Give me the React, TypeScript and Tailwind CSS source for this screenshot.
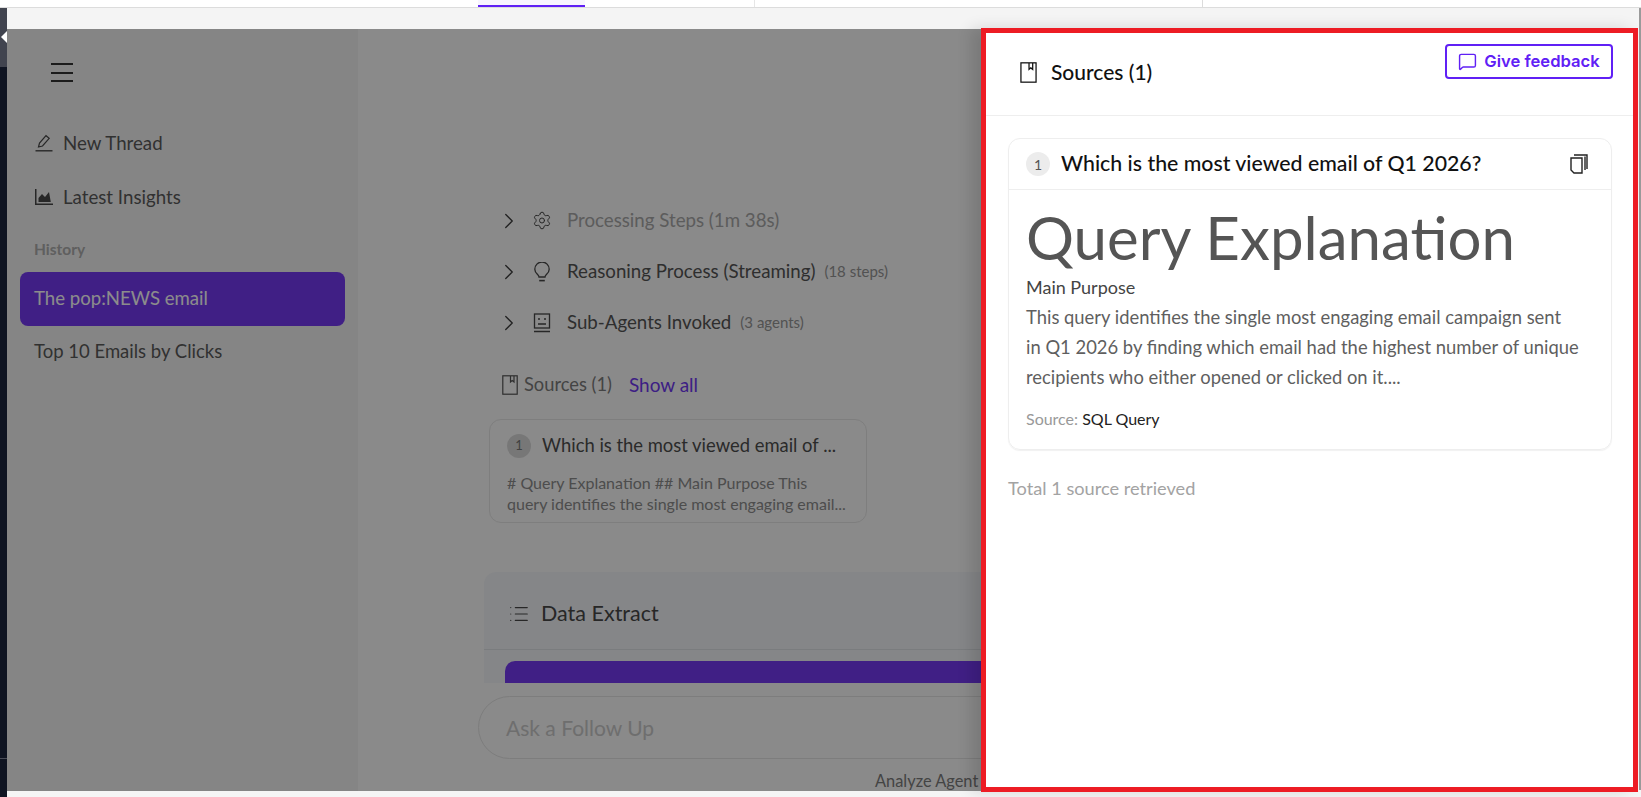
import { ChevronRight, Settings, List, MessageSquare } from "lucide-react";

const font = { fontFamily: '"Lato", "Open Sans", sans-serif' };

function BookIcon({ className }: { className?: string }) {
  return (
    <svg viewBox="0 0 16 20" fill="none" stroke="currentColor" strokeWidth="1.2" className={className}>
      <rect x="0.8" y="0.8" width="14.4" height="18.4" />
      <path d="M8.5 1v6l1.7-1.4L12 7V1" />
    </svg>
  );
}

function BulbIcon() {
  return (
    <svg viewBox="0 0 16 20" fill="none" stroke="currentColor" strokeWidth="1.3" className="w-[16px] h-[20px]">
      <path d="M5 15c0-2.4-4.2-3.4-4.2-7.8a7.2 7.2 0 0 1 14.4 0c0 4.4-4.2 5.4-4.2 7.8z" />
      <path d="M5.2 18.6h5.6" strokeWidth="1.6" />
    </svg>
  );
}

function AgentIcon() {
  return (
    <svg viewBox="0 0 18 20" fill="none" stroke="currentColor" strokeWidth="1.3" className="w-[18px] h-[20px]">
      <rect x="1.5" y="1" width="15" height="14" />
      <path d="M5 11h8M1 18.5h16" />
      <circle cx="6" cy="6" r="1" fill="currentColor" stroke="none" />
      <circle cx="12" cy="6" r="1" fill="currentColor" stroke="none" />
    </svg>
  );
}

function PencilIcon() {
  return (
    <svg viewBox="0 0 18 18" fill="none" stroke="currentColor" strokeWidth="1.2" className="w-[18px] h-[18px]">
      <path d="M3.5 13l1-4L11 1.7l3.2 2.6L7.5 12z" />
      <path d="M0.5 16.8h17" strokeWidth="1.4" />
    </svg>
  );
}

function ChartIcon() {
  return (
    <svg viewBox="0 0 18 16" className="w-[18px] h-[16px]" fill="currentColor">
      <path d="M0 0h1.5v14.4H18V16H0z" />
      <path d="M3.5 13V9l3.5-4 3 3 4-5 1.8 10z" />
    </svg>
  );
}

function CopyIcon() {
  return (
    <svg viewBox="0 0 18 20" fill="none" stroke="currentColor" strokeWidth="1.4" className="w-[18px] h-[20px]">
      <path d="M1 4h11v15H4l-3-3z" />
      <path d="M4 1h13v14" />
      <path d="M15 2.5V16" />
    </svg>
  );
}

function SideRow({ icon, label }: { icon: React.ReactNode; label: string }) {
  return (
    <div className="flex items-center h-[54px] pl-[28px] gap-[10px] text-[18.7px] text-[#5a5a5a]">
      <span className="w-[18px] flex justify-center text-[#484848]">{icon}</span>
      <span>{label}</span>
    </div>
  );
}

function StepRow({
  icon,
  label,
  extra,
  muted,
}: {
  icon: React.ReactNode;
  label: string;
  extra?: string;
  muted?: boolean;
}) {
  return (
    <div className="flex items-center h-[51px] pl-[18px]">
      <ChevronRight className="w-[26px] h-[26px] text-[#3c3c3c] -ml-[6px] -mr-[4px]" strokeWidth={1.2} />
      <span className="w-[20px] ml-[14px] flex justify-center text-[#484848]">{icon}</span>
      <span className={`ml-[15px] text-[18.7px] ${muted ? "text-[#a8a8a8]" : "text-[#555555]"}`}>{label}</span>
      {extra && <span className="ml-[9px] text-[15px] text-[#959595]">{extra}</span>}
    </div>
  );
}

export default function App() {
  return (
    <div className="relative w-[1641px] h-[797px] overflow-hidden flex flex-col bg-[#f5f5f5]" style={font}>
      {/* browser tab strip */}
      <div className="h-[8px] shrink-0 bg-white border-b border-[#dcdcdc] flex">
        <div className="ml-[478px] w-[107px] h-[7px] bg-[#f8f5ff] border-b-2 border-[#5f1ff5]" />
        <div className="ml-[169px] w-px h-[7px] bg-[#e6e6e6]" />
        <div className="ml-[447px] w-px h-[7px] bg-[#dcdcdc]" />
      </div>

      <div className="flex-1 flex min-h-0">
        {/* left edge strip */}
        <div className="w-[7px] shrink-0 flex flex-col bg-[#0f1422]">
          <div className="h-[59px] bg-[#41444f] flex items-center justify-end pb-[1px]">
            <div className="w-0 h-0 border-y-[6px] border-y-transparent border-r-[6px] border-r-white" />
          </div>
          <div className="mt-[691px] h-px bg-[#4a4d58]" />
        </div>

        <div className="flex-1 min-w-0 flex flex-col">
          <div className="h-[21px] shrink-0 bg-[#f4f4f4]" />

          {/* application under the dim layer */}
          <div className="relative h-[762px] w-[1631px] flex overflow-hidden bg-[#fbfbfb]">
            <aside className="w-[351px] shrink-0 bg-[#f3f3f3] flex flex-col">
              <div className="h-[80px] pl-[44px] pt-[34px]">
                <div className="w-[22px] h-[19px] flex flex-col justify-between">
                  <div className="h-[2px] bg-[#333333]" />
                  <div className="h-[2px] bg-[#333333]" />
                  <div className="h-[2px] bg-[#333333]" />
                </div>
              </div>
              <div className="mt-[7px]">
                <SideRow icon={<PencilIcon />} label="New Thread" />
                <SideRow icon={<ChartIcon />} label="Latest Insights" />
              </div>
              <div className="mt-[13px] h-[26px] pl-[27px] flex items-center text-[15.5px] font-bold text-[#adadad]">History</div>
              <div className="mt-[9px] ml-[13px] w-[325px] h-[54px] rounded-[8px] bg-[#763af2] text-white text-[18.6px] pl-[14px] pb-[1px] flex items-center">
                The pop:NEWS email
              </div>
              <div className="h-[52px] pl-[27px] flex items-center text-[18.5px] text-[#5a5a5a]">Top 10 Emails by Clicks</div>
            </aside>

            <main className="flex-1 min-w-0 flex flex-col">
              <div className="h-[654px] shrink-0 overflow-hidden pl-[126px] pt-[166px]">
                <StepRow icon={<Settings className="w-[23px] h-[23px]" strokeWidth={1.2} />} label="Processing Steps (1m 38s)" muted />
                <StepRow icon={<BulbIcon />} label="Reasoning Process (Streaming)" extra="(18 steps)" />
                <StepRow icon={<AgentIcon />} label="Sub-Agents Invoked" extra="(3 agents)" />

                <div className="mt-[23px] h-[28px] pl-[18px] flex items-center text-[18px]">
                  <BookIcon className="w-[16px] h-[20px] text-[#555555]" />
                  <span className="ml-[6px] text-[18.3px] text-[#7c7c7c]">Sources (1)</span>
                  <span className="ml-[17px] text-[19px] text-[#6f38f0]">Show all</span>
                </div>

                <div className="mt-[20px] ml-[5px] w-[378px] h-[104px] rounded-[12px] border border-[#e6e6e6] pl-[17px] pr-[16px] pt-[12px]">
                  <div className="flex items-center">
                    <span className="w-[24px] h-[24px] rounded-full bg-[#d9d9d9] text-[#777777] text-[13px] flex items-center justify-center shrink-0">1</span>
                    <span className="ml-[11px] text-[18.4px] text-[#4e4e4e] whitespace-nowrap">Which is the most viewed email of ...</span>
                  </div>
                  <p className="mt-[12px] text-[16px] leading-[21px] text-[#8c8c8c] whitespace-nowrap">
                    # Query Explanation ## Main Purpose This
                    <br />
                    query identifies the single most engaging email...
                  </p>
                </div>

                <section className="mt-[49px] w-[1028px] h-[300px] rounded-t-[12px] bg-[#f3f5f8]">
                  <div className="h-[78px] border-b border-[#dfe2e6] pl-[24px] pt-[6px] flex items-center text-[21.5px] text-[#484848]">
                    <List className="w-[22px] h-[22px]" strokeWidth={1.3} />
                    <span className="ml-[11px]">Data Extract</span>
                  </div>
                  <div className="mt-[11px] ml-[21px] w-[986px] h-[60px] rounded-t-[10px] bg-[#763af2]" />
                </section>
              </div>

              <div className="mt-[13px] ml-[120px] w-[1040px] h-[63px] shrink-0 rounded-[32px] border border-[#e3e3e3] pl-[27px] flex items-center text-[21px] text-[#c9c9c9]">
                Ask a Follow Up
              </div>
              <div className="mt-[12px] ml-[517px] text-[16.4px] leading-[20px] text-[#7c7c7c] whitespace-nowrap">Analyze Agent</div>
            </main>

            {/* dim layer */}
            <div className="absolute inset-0 bg-black/45" />
          </div>
        </div>

        <div className="w-[3px] shrink-0 pl-px">
          <div className="h-[782px] bg-[#9a9a9a]" />
        </div>
      </div>

      {/* drawer */}
      <div className="absolute top-[28px] bottom-[5px] right-[3px] w-[657px] border-[5px] border-[#ed1c24] bg-white flex flex-col shadow-[-10px_0_14px_rgba(0,0,0,0.12)]">
        <header className="h-[83px] shrink-0 border-b border-[#eeeeee] flex justify-between pl-[34px] pr-[20px]">
          <div className="flex items-center pb-[4px] text-[#111111]">
            <BookIcon className="w-[17px] h-[21px]" />
            <span className="ml-[14px] text-[21px] font-medium">Sources (1)</span>
          </div>
          <button className="self-start mt-[11px] w-[168px] h-[35px] rounded-[4px] border-2 border-[#6020f5] text-[#6020f5] flex items-center justify-center gap-[7px] text-[16.6px] font-semibold" style={{ fontFamily: '"Inter", sans-serif' }}>
            <MessageSquare className="w-[19px] h-[19px]" strokeWidth={1.8} />
            Give feedback
          </button>
        </header>

        <div className="flex-1 pl-[22px] pr-[21px] pt-[22px]">
          <article className="h-[312px] rounded-[12px] border border-[#eeeeee] shadow-[0_1px_1px_rgba(0,0,0,0.06)]">
            <div className="h-[51px] border-b border-[#eeeeee] flex items-center pl-[17px] pr-[23px]">
              <span className="w-[24px] h-[24px] rounded-full bg-[#ececec] text-[#555555] text-[14px] flex items-center justify-center">1</span>
              <span className="ml-[11px] text-[21.3px] font-medium text-[#111111]">Which is the most viewed email of Q1 2026?</span>
              <span className="ml-auto text-[#222222]"><CopyIcon /></span>
            </div>
            <div className="pl-[17px] pr-[20px]">
              <h1 className="mt-[12px] h-[70px] text-[60px] leading-[70px] font-normal text-[#555555] whitespace-nowrap">Query Explanation</h1>
              <p className="mt-[2px] h-[26px] text-[18px] leading-[26px] text-[#444444]">Main Purpose</p>
              <p className="mt-[2px] text-[18.4px] leading-[30px] text-[#5f5f5f] whitespace-nowrap">
                This query identifies the single most engaging email campaign sent
                <br />
                in Q1 2026 by finding which email had the highest number of unique
                <br />
                recipients who either opened or clicked on it....
              </p>
              <p className="mt-[15px] text-[16px] leading-[24px]">
                <span className="text-[#999999]">Source: </span>
                <span className="text-[#222222]">SQL Query</span>
              </p>
            </div>
          </article>
          <p className="mt-[25px] text-[18.2px] leading-[26px] text-[#a3a3a3]">Total 1 source retrieved</p>
        </div>
      </div>
    </div>
  );
}
